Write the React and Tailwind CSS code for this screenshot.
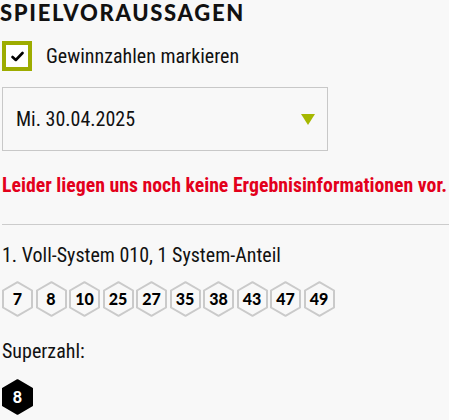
import React from "react";

/* Spielvoraussagen panel */

const numbers = [7, 8, 10, 25, 27, 35, 38, 43, 47, 49];

const Hex = ({ value, dark }) => (
  <div className="relative w-[31px] h-[36px] flex items-center justify-center">
    <svg
      className="absolute inset-0"
      width="31"
      height="36"
      viewBox="0 0 31 36"
    >
      <polygon
        points="15.5,1.2 30,9.5 30,26.5 15.5,34.8 1,26.5 1,9.5"
        fill={dark ? "#000" : "#f8f8f8"}
        stroke={dark ? "#000" : "#cacaca"}
        strokeWidth="2"
        strokeLinejoin="round"
      />
    </svg>
    <span
      className={`relative font-['Lato',sans-serif] font-black text-[16px] leading-[18px] ${
        dark ? "text-white" : "text-black"
      }`}
    >
      {value}
    </span>
  </div>
);

export default function App() {
  return (
    <div className="w-[449px] h-[420px] overflow-hidden bg-[#f8f8f8] text-[#111] font-['Roboto',sans-serif] font-stretch-condensed">

      {/* Title */}
      <h2 className="pt-[1px] pr-[4px] font-['Lato',sans-serif] font-black text-[22px] leading-[24px] tracking-[1.7px] font-stretch-normal whitespace-nowrap">
        SPIELVORAUSSAGEN
      </h2>

      {/* Checkbox */}
      <label className="flex items-center mt-[16px] ml-[2px]">
        <span className="w-[30px] h-[30px] border-[4px] border-[#9dac00] bg-white flex items-center justify-center">
          <svg width="13" height="11" viewBox="0 0 13 11">
            <path d="M1.5 6 L4.8 9 L11.5 2" fill="none" stroke="#000" strokeWidth="2.6" strokeLinecap="round" strokeLinejoin="round" />
          </svg>
        </span>
        <span className="ml-[14px] text-[20px] leading-[22px]">
          Gewinnzahlen markieren
        </span>
      </label>

      {/* Date select */}
      <div className="mt-[16px] ml-[2px] w-[326px] h-[64px] border border-[#c8c8c8] flex items-center justify-between pl-[13px] pr-[12px]">
        <span className="text-[20px] leading-[22px]">Mi. 30.04.2025</span>
        <svg width="14" height="11" viewBox="0 0 14 11">
          <polygon points="0,0 14,0 7,11" fill="#a6b800" />
        </svg>
      </div>

      {/* No results message */}
      <p className="mt-[24px] ml-[2px] text-[19.8px] leading-[22px] font-bold text-[#e3001b] whitespace-nowrap">
        Leider liegen uns noch keine Ergebnisinformationen vor.
      </p>

      <hr className="mt-[27px] ml-[2px] border-t border-[#cccccc]" />

      {/* System */}
      <p className="mt-[19px] ml-[2px] text-[20px] leading-[22px]">
        1. Voll-System 010, 1 System-Anteil
      </p>

      <div className="flex gap-[2.5px] mt-[15px] ml-[2px]">
        {numbers.map((n) => (
          <Hex key={n} value={n} />
        ))}
      </div>

      <p className="mt-[23px] ml-[2px] text-[20px] leading-[22px]">Superzahl:</p>

      <div className="mt-[17px] ml-[2px]">
        <Hex value={8} dark />
      </div>
    </div>
  );
}
